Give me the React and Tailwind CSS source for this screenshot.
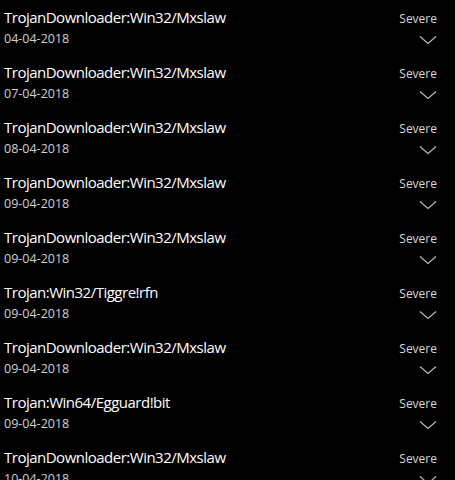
const rows = [
  ["TrojanDownloader:Win32/Mxslaw", "04-04-2018"],
  ["TrojanDownloader:Win32/Mxslaw", "07-04-2018"],
  ["TrojanDownloader:Win32/Mxslaw", "08-04-2018"],
  ["TrojanDownloader:Win32/Mxslaw", "09-04-2018"],
  ["TrojanDownloader:Win32/Mxslaw", "09-04-2018"],
  ["Trojan:Win32/Tiggre!rfn", "09-04-2018"],
  ["TrojanDownloader:Win32/Mxslaw", "09-04-2018"],
  ["Trojan:Win64/Egguard!bit", "09-04-2018"],
  ["TrojanDownloader:Win32/Mxslaw", "10-04-2018"],
];

function Chevron() {
  return (
    <svg width="18" height="10" viewBox="0 0 18 10" className="block">
      <path d="M1 1.5 L9 8.5 L17 1.5" fill="none" stroke="#bdbdbd" strokeWidth="1.1" />
    </svg>
  );
}

export default function App() {
  return (
    <div className="w-[455px] h-[480px] overflow-hidden bg-black text-white" style={{ fontFamily: '"Open Sans", "Noto Sans", sans-serif' }}>
      <div className="flex flex-col pt-[7px]">
        {rows.map(([name, date], i) => (
          <div key={i} className="flex h-[55px] pl-[4px] pr-[18px]">
            <div className="flex flex-col flex-1">
              <div className="text-[15px] leading-[20px] tracking-[-0.5px] text-white">{name}</div>
              <div className="mt-[3px] text-[12.5px] leading-[18px] text-[#d0d0d0]">{date}</div>
            </div>
            <div className="flex flex-col items-end pt-[2px]">
              <div className="text-[12px] leading-[20px] text-[#d8d8d8]">Severe</div>
              <div className="mt-[6px]"><Chevron /></div>
            </div>
          </div>
        ))}
      </div>
    </div>
  );
}
